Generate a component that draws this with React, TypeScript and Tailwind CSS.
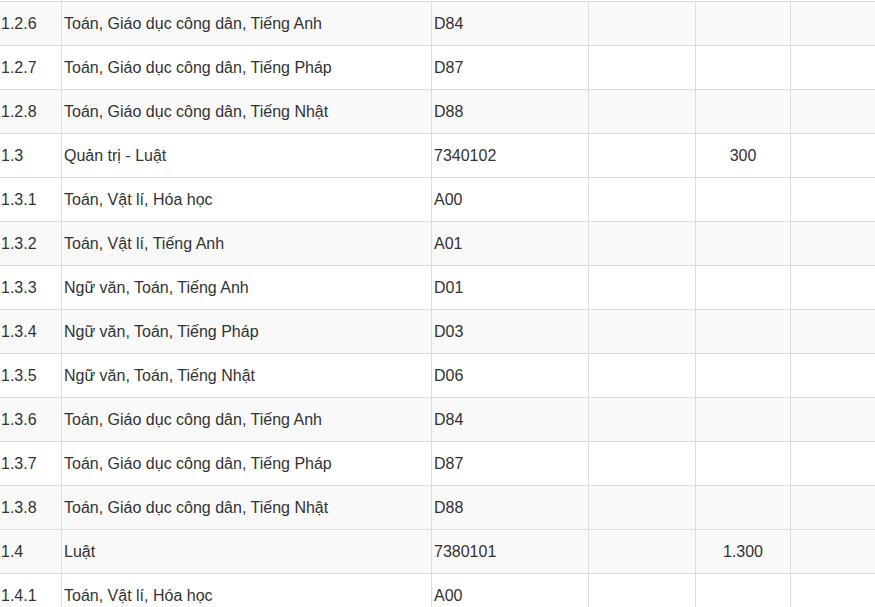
const rows: { no: string; name: string; code: string; quota?: string; gray: boolean }[] = [
    { no: '1.2.6', name: 'Toán, Giáo dục công dân, Tiếng Anh', code: 'D84', gray: true },
    { no: '1.2.7', name: 'Toán, Giáo dục công dân, Tiếng Pháp', code: 'D87', gray: false },
    { no: '1.2.8', name: 'Toán, Giáo dục công dân, Tiếng Nhật', code: 'D88', gray: true },
    { no: '1.3', name: 'Quản trị - Luật', code: '7340102', quota: '300', gray: false },
    { no: '1.3.1', name: 'Toán, Vật lí, Hóa học', code: 'A00', gray: false },
    { no: '1.3.2', name: 'Toán, Vật lí, Tiếng Anh', code: 'A01', gray: true },
    { no: '1.3.3', name: 'Ngữ văn, Toán, Tiếng Anh', code: 'D01', gray: false },
    { no: '1.3.4', name: 'Ngữ văn, Toán, Tiếng Pháp', code: 'D03', gray: true },
    { no: '1.3.5', name: 'Ngữ văn, Toán, Tiếng Nhật', code: 'D06', gray: false },
    { no: '1.3.6', name: 'Toán, Giáo dục công dân, Tiếng Anh', code: 'D84', gray: true },
    { no: '1.3.7', name: 'Toán, Giáo dục công dân, Tiếng Pháp', code: 'D87', gray: false },
    { no: '1.3.8', name: 'Toán, Giáo dục công dân, Tiếng Nhật', code: 'D88', gray: true },
    { no: '1.4', name: 'Luật', code: '7380101', quota: '1.300', gray: true },
    { no: '1.4.1', name: 'Toán, Vật lí, Hóa học', code: 'A00', gray: false },
];

export default function App() {
    return (
        <div className="h-[607px] w-[875px] overflow-hidden bg-white pt-px font-['Liberation_Sans',Arial,sans-serif] text-[16px] text-[#333333]">
            <div className="border-t border-[#dddddd]">
                {rows.map((r, i) => (
                    <div
                        key={i}
                        className={`flex h-[44px] border-b border-[#dddddd] ${r.gray ? 'bg-[#f9f9f9]' : 'bg-white'}`}
                    >
                        {/* STT */}
                        <div className="flex w-[62px] shrink-0 items-center border-r border-[#dddddd] pl-[1px]">
                            {r.no}
                        </div>
                        {/* Ten nganh / to hop */}
                        <div className="flex w-[370px] shrink-0 items-center border-r border-[#dddddd] pl-[2px]">
                            {r.name}
                        </div>
                        {/* Ma */}
                        <div className="flex w-[157px] shrink-0 items-center border-r border-[#dddddd] pl-[2px]">
                            {r.code}
                        </div>
                        <div className="w-[107px] shrink-0 border-r border-[#dddddd]"></div>
                        {/* Chi tieu */}
                        <div className="flex w-[95px] shrink-0 items-center justify-center border-r border-[#dddddd]">
                            {r.quota}
                        </div>
                        <div className="flex-1"></div>
                    </div>
                ))}
            </div>
        </div>
    );
}
